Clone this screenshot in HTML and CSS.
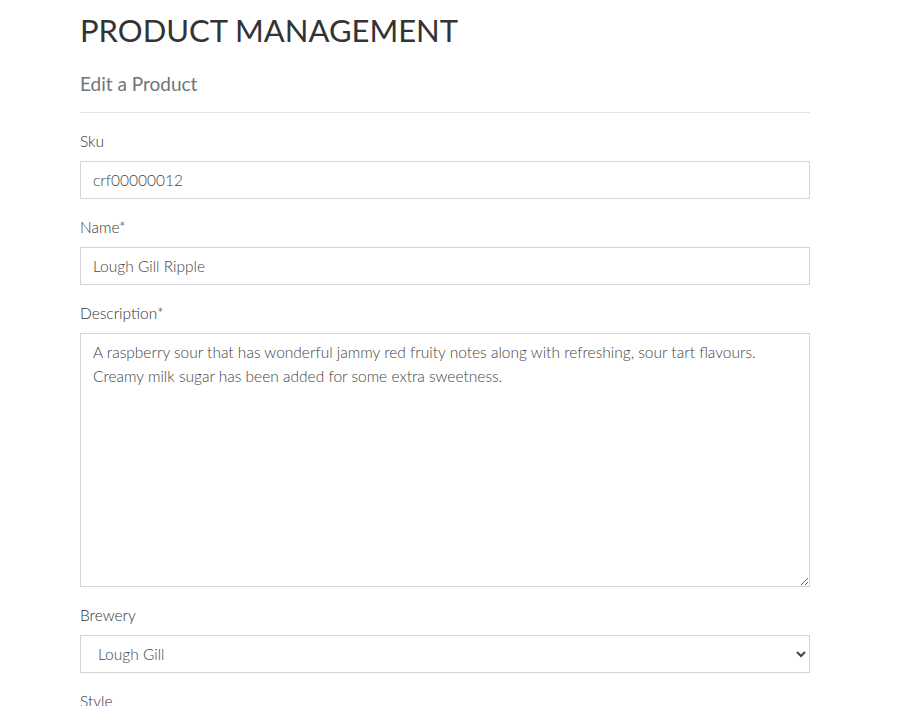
FILE: index.html
```html
<!DOCTYPE html>
<html lang="en">
<head>
<meta charset="utf-8">
<title>Product Management</title>
<link rel="stylesheet" href="styles.css">
</head>
<body>
<main class="page">
  <h1 class="title">PRODUCT MANAGEMENT</h1>
  <h2 class="subtitle">Edit a Product</h2>
  <hr class="rule">
  <form class="form">
    <div class="group">
      <label class="label" for="sku">Sku</label>
      <input class="field" id="sku" type="text" value="crf00000012">
    </div>
    <div class="group">
      <label class="label" for="name">Name*</label>
      <input class="field" id="name" type="text" value="Lough Gill Ripple">
    </div>
    <div class="group">
      <label class="label" for="desc">Description*</label>
      <textarea class="field area" id="desc">A raspberry sour that has wonderful jammy red fruity notes along with refreshing, sour tart flavours. Creamy milk sugar has been added for some extra sweetness.</textarea>
    </div>
    <div class="group">
      <label class="label" for="brewery">Brewery</label>
      <select class="field select" id="brewery">
        <option>Lough Gill</option>
      </select>
    </div>
    <div class="group">
      <label class="label" for="style">Style</label>
    </div>
  </form>
</main>
</body>
</html>
```

FILE: styles.css
```css
html, body {
  margin: 0;
  padding: 0;
  background: #ffffff;
}
body {
  font-family: Lato, "Open Sans", sans-serif;
  color: #333333;
  overflow: hidden;
}
.page {
  width: 730px;
  padding-left: 80px;
  padding-top: 10px;
}
.title {
  margin: 0;
  font-size: 31px;
  font-weight: 400;
  line-height: 40px;
  color: #333333;
}
.subtitle {
  margin: 22px 0 0 0;
  font-size: 19px;
  font-weight: 400;
  line-height: 24px;
  color: #6c757d;
}
.rule {
  margin: 16px 0 16px 0;
  border: 0;
  border-top: 1px solid #e3e3e3;
  height: 0;
}
.form {
  display: flex;
  flex-direction: column;
}
.group {
  display: flex;
  flex-direction: column;
  margin-bottom: 16px;
}
.label {
  font-size: 15.5px;
  font-weight: 300;
  line-height: 24px;
  margin-bottom: 8px;
  color: #333333;
}
.field {
  box-sizing: border-box;
  width: 730px;
  height: 38px;
  border: 1px solid #d3d3d8;
  border-radius: 0;
  padding: 6px 12px;
  font-family: Lato, "Open Sans", sans-serif;
  font-size: 15.5px;
  font-weight: 300;
  color: #444444;
  background: #ffffff;
  outline: none;
}
.area {
  height: 254px;
  resize: vertical;
  line-height: 24px;
  padding-top: 6px;
}
.select {
  padding-left: 13px;
}
```
